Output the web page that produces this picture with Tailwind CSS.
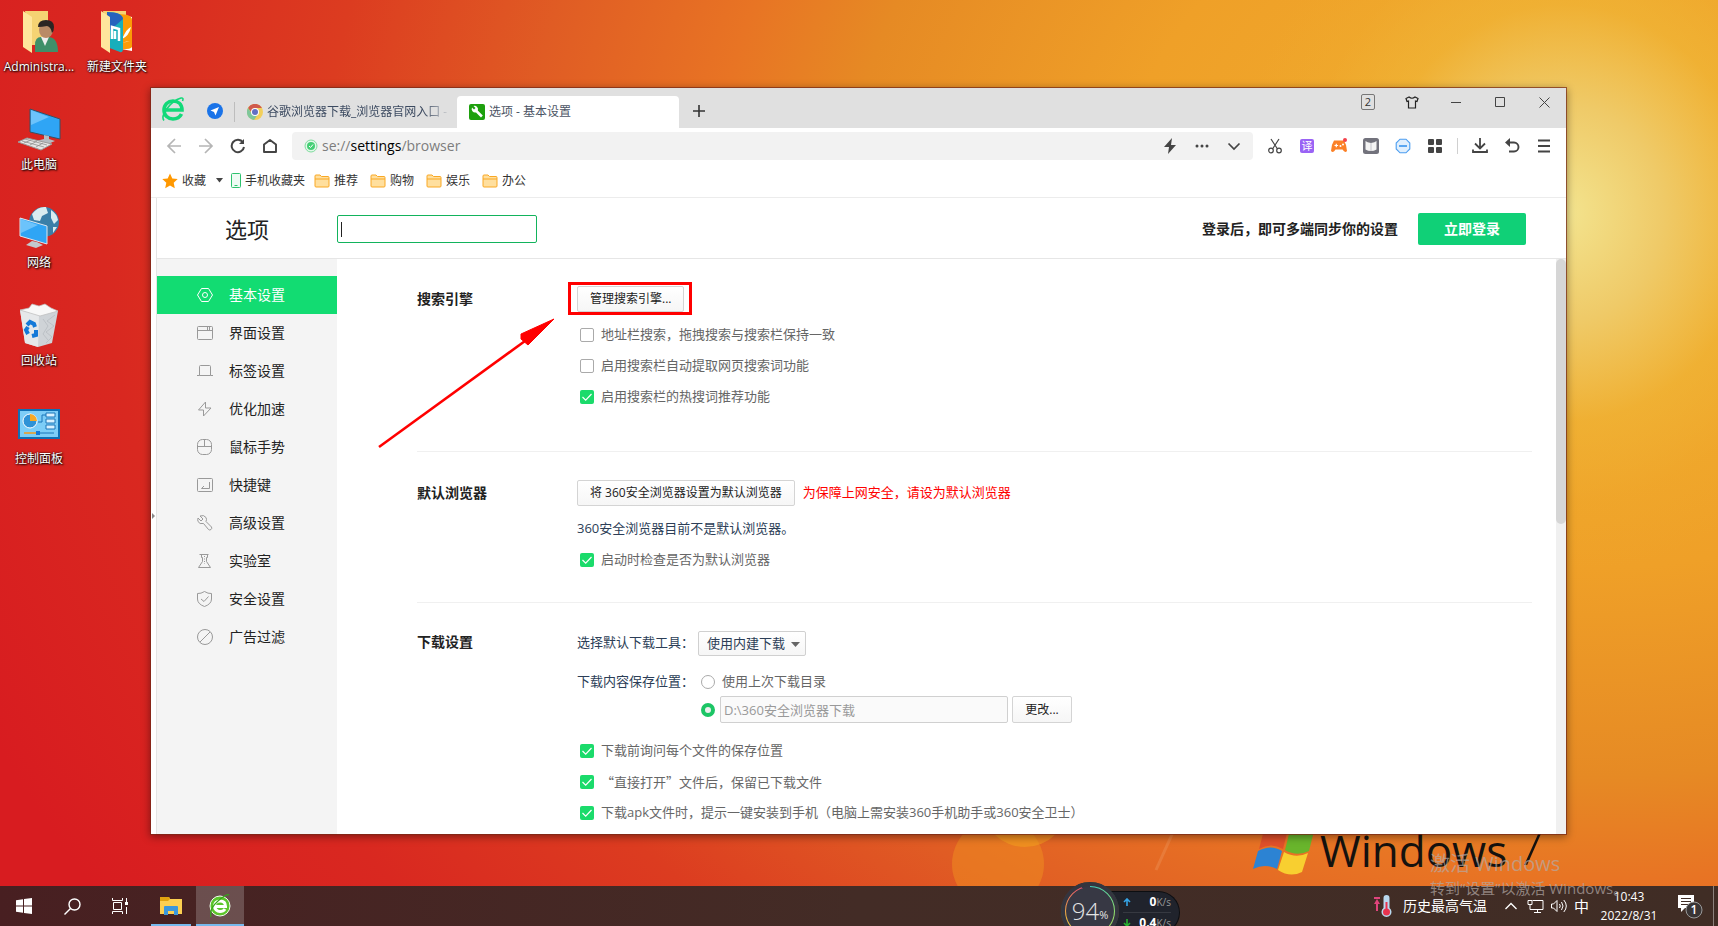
<!DOCTYPE html>
<html lang="zh-CN">
<head>
    <meta charset="UTF-8">
    <meta name="viewport" content="width=device-width, initial-scale=1.0">
    <title>选项 - 基本设置</title>
    <script src="https://cdn.jsdelivr.net/npm/@tailwindcss/browser@4"></script>
</head>
<body class="font-['Open_Sans','Noto_Sans_CJK_SC',sans-serif] text-xs text-[#222]">

<!-- shared symbols -->
<svg class="hidden">
    <symbol id="tick" viewBox="0 0 14 14"><path d="M2.5 7l3.2 3.2L11.5 4" fill="none" stroke="#fff" stroke-width="1.2"/></symbol>
    <symbol id="folder" viewBox="0 0 16 14"><path d="M1 2V12a1 1 0 0 0 1 1h12a1 1 0 0 0 1-1V3.500a1 1 0 0 0-1-1H7.500L6 1H2a1 1 0 0 0-1 1z" fill="#ffdf9e" stroke="#f9a825"/><path d="M1 5h14" stroke="#f9a825"/></symbol>
</svg>

<div class="relative flex h-screen flex-col overflow-hidden bg-[radial-gradient(ellipse_1700px_1300px_at_93%_22%,#f0b030_0%,#efa028_28%,#e68a24_44%,#e87424_52%,#e05c24_63%,#dc3c20_75%,#d92820_88%,#d81c20_103%)]">
    <div class="absolute inset-0 bg-[radial-gradient(ellipse_330px_360px_at_91%_23%,#f3e48f_0%,#efca68_30%,#f0b83a88_58%,#f0b03033_80%,#f0b03000_100%)]"></div>

    <!-- desktop -->
    <div class="relative min-h-0 flex-1">
        <!-- wallpaper shapes -->
        <svg class="absolute bottom-0 left-[940px]" width="260" height="56" viewBox="0 0 260 56">
            <circle cx="58" cy="34" r="46" fill="#f09020" opacity=".5"/>
            <circle cx="85" cy="-26" r="43" fill="#f6a820" opacity=".45"/>
            <path d="M234 0l-18 40" stroke="#f09a60" stroke-width="3" opacity=".35"/>
        </svg>
        <div class="absolute bottom-2 left-[1252px] flex items-end text-[#15120f]">
            <svg width="64" height="56" viewBox="0 0 64 56">
                <path d="M12 8q14-8 24-1l-5 20q-12-7-24 0z" fill="#e0502a"/>
                <path d="M38 8q12 7 24 1l-5 20q-12 6-24-1z" fill="#69b52c"/>
                <path d="M6 29q13-7 24 0l-5 18q-12-6-24 0z" fill="#2c83d3"/>
                <path d="M32 30q12 7 24 1l-6 19q-12 6-24-2z" fill="#f8cf30"/>
            </svg>
            <span class="pl-1 text-[44px] leading-[56px]">Windows</span>
            <span class="pl-2 text-[54px] leading-[68px] font-light">7</span>
        </div>

        <div class="grid w-39 auto-rows-[98px] grid-cols-2 justify-items-center pt-[9px] text-center leading-4 text-white [text-shadow:1px_1px_2px_#000,0_0_2px_#000]">
            <div>
                <svg class="mx-auto mb-1" width="44" height="46" viewBox="0 0 44 46">
                    <path d="M8 2h23v34H14z" fill="#f5d373"/>
                    <path d="M6 2l9 6v36L6 38z" fill="#ffe69c"/>
                    <path d="M18 43V36q0-8 6-8h8q9 1 9 15z" fill="#3f8f69"/>
                    <path d="M24 28l4 9 4-9z" fill="#eee"/>
                    <ellipse cx="29" cy="21" rx="7" ry="8" fill="#b98a66"/>
                    <path d="M21 18q0-7 8-7t8 7q0 4-2 6-1-6-5-7-5 1-9 1z" fill="#2b2523"/>
                </svg>
                Administra...
            </div>
            <div>
                <svg class="mx-auto mb-1" width="44" height="46" viewBox="0 0 44 46">
                    <path d="M8 2h23v34H14z" fill="#f5d373"/>
                    <path d="M26 6l11 2v34l-11-2z" fill="#fff"/><path d="M23 5q14 0 14 6v27q-2 3-14 2z" fill="#fb9b07"/>
                    <path d="M27 30q5-11 9-12-2 9-9 12zm0 4q5-2 8-2" fill="#fff"/>
                    <path d="M12 3q15 0 16 7v31q-1 3-3 2l-13-5z" fill="#18aebb"/><path d="M12 3q15 0 16 7l-16 14z" fill="#2563bd"/>
                    <path d="M17 30V18l7 2v12m-4-2V22" stroke="#fff" stroke-width="2.500" fill="none"/>
                    <path d="M6 2l9 6v36L6 38z" fill="#ffe69c"/>
                </svg>
                新建文件夹
            </div>
            <div class="col-span-2 w-1/2 justify-self-start">
                <svg class="mx-auto mb-1" width="44" height="46" viewBox="0 0 44 46">
                    <path d="M13 2l30 10v20L13 25z" fill="#2fa5f5" stroke="#3c4f60"/>
                    <path d="M14 3l18 7-18 8z" fill="#6cc3fb"/>
                    <path d="M27 28l5 1v3l6 2-7 3-12-3 8-2z" fill="#b6bcc2"/>
                    <path d="M10 31l25 6-11 6L1 35z" fill="#e5e5e5" stroke="#9a9a9a"/>
                    <path d="M5 34l22 6M8 32l22 6M14 33l-7 3m13-2l-7 4m13-2l-7 4" stroke="#8f8f8f" stroke-width=".8"/>
                </svg>
                此电脑
            </div>
            <div class="col-span-2 w-1/2 justify-self-start">
                <svg class="mx-auto mb-1" width="44" height="46" viewBox="0 0 44 46">
                    <circle cx="27" cy="17" r="15" fill="#3a7fa8"/>
                    <path d="M15 9q6-8 14-7l2 6-6 3-2 5-6-1zM34 5q6 4 7 10l-4 4-3-6zM36 22l4 0-4 6z" fill="#d9ecf0"/>
                    <path d="M3 13l27 8v18L3 31z" fill="#2fa5f5" stroke="#dfe6ec"/>
                    <path d="M4 14l17 6-17 8z" fill="#6cc3fb"/>
                    <path d="M15 36l5 1 6 3-7 3-10-3z" fill="#c3c8cd"/>
                </svg>
                网络
            </div>
            <div class="col-span-2 w-1/2 justify-self-start">
                <svg class="mx-auto mb-1" width="44" height="46" viewBox="0 0 44 46">
                    <path d="M3 7l38 1-6 32-14 4-13-4z" fill="#cfd3d7"/>
                    <path d="M3 7l19 5-1 32-13-4z" fill="#e6e8ea"/>
                    <path d="M3 7l9-2 3-4 7 2 6-2 6 4 7 3-18 5z" fill="#f8f8f8" stroke="#bbb" stroke-width=".7"/>
                    <path d="M38 12l-8 6 7 5-8 6 6 5-6 6M26 16l5 7-5 8 5 6" fill="none" stroke="#b7bcc1" stroke-width=".8"/>
                    <path d="M10 22l3-3 4 2 1 3" fill="none" stroke="#1479d8" stroke-width="4"/>
                    <path d="M19 27v5l-4 1m-4-2l-2-4 2-3" fill="none" stroke="#1479d8" stroke-width="4"/>
                </svg>
                回收站
            </div>
            <div class="col-span-2 w-1/2 justify-self-start">
                <svg class="mx-auto mb-1" width="44" height="46" viewBox="0 0 44 46">
                    <path d="M1 8h42v30H1z" fill="#0f6fb5"/><path d="M3 10h38v26H3z" fill="#7dcdf7"/>
                    <circle cx="13" cy="20" r="7" fill="#2f92d6" stroke="#fff"/>
                    <path d="M13 20v-7a7 7 0 0 1 7 7z" fill="#f7a825"/>
                    <path d="M21 21h4v-7h4" fill="none" stroke="#1a75b8"/>
                    <path d="M29 12h9v4h-9zm0 6h9v4h-9zm0 6h9v4h-9z" fill="#d9f1ff" stroke="#1a75b8"/>
                    <path d="M7 32h14" stroke="#f39a1c" stroke-width="1.500"/><path d="M21 32h16" stroke="#1a75b8"/>
                    <path d="M19 30h4v4h-4z" fill="#1479d8"/>
                </svg>
                控制面板
            </div>
        </div>

        <!-- browser window -->
        <div class="absolute top-[87px] right-[151px] bottom-[51px] left-[150px] flex flex-col overflow-hidden border border-[#7a2a18]/70 bg-white bg-clip-padding shadow-[0_2px_8px_rgba(0,0,0,0.4)]">
            <!-- tab strip -->
            <div class="flex h-10 shrink-0 items-end bg-[#e0e0e0]">
                <div class="flex h-[34px] w-[83px] items-center gap-[22px] pl-[10px]">
                    <svg class="mb-1" width="24" height="26" viewBox="0 0 24 26" fill="none">
                        <path d="M4 14h17C21 8 17 5 12 5S3 8.500 3 14s4 9 9 9c4 0 7-2 8.500-5" stroke="#12d979" stroke-width="3.600"/>
                        <path d="M3 24.500C-1 20 9 5 20 2q3-.5 1.500 3" stroke="#12d979" stroke-width="1.600"/>
                    </svg>
                    <svg width="16" height="16" viewBox="0 0 16 16"><circle cx="8" cy="8" r="8" fill="#1a73e8"/><path d="M12 4L3.500 7.500 7 9l1.500 3.500z" fill="#fff"/></svg>
                </div>
                <div class="flex h-8 w-[223px] items-center overflow-hidden">
                    <span class="mr-3 h-5 w-px shrink-0 bg-[#bdbdbd]"></span>
                    <svg class="mr-1 shrink-0" width="16" height="16" viewBox="0 0 16 16">
                        <circle cx="8" cy="8" r="8" fill="#f2cf5b"/>
                        <path d="M1 4a8 8 0 0 1 14 0H8L5 9z" fill="#d05a4c"/>
                        <path d="M1 4a8 8 0 0 0 6 12l4-6H5z" fill="#7fc79b"/>
                        <circle cx="8" cy="8" r="4" fill="#fff"/><circle cx="8" cy="8" r="3" fill="#6270c4"/>
                    </svg>
                    <span class="w-[184px] whitespace-nowrap text-[#3c4a60] [mask-image:linear-gradient(to_right,#000_85%,transparent)]">谷歌浏览器下载_浏览器官网入口 -</span>
                </div>
                <div class="flex h-8 w-[222px] items-center gap-1 rounded-t bg-white pl-3 text-[#4c5565]">
                    <svg width="16" height="16" viewBox="0 0 16 16"><rect width="16" height="16" rx="2" fill="#1ea00e"/><path d="M3 3.500l2 2 1.500-1.500-2-2a3.500 3.500 0 0 1 4.300 4.600l5 5-1.800 1.800-5-5A3.500 3.500 0 0 1 3 3.500z" fill="#fff"/></svg>
                    选项 - 基本设置
                </div>
                <button class="flex h-[34px] w-[40px] items-center justify-center" aria-label="新标签页">
                    <svg width="14" height="14" viewBox="0 0 14 14"><path d="M7 1v12M1 7h12" stroke="#333" stroke-width="1.600"/></svg>
                </button>
                <div class="ml-auto flex h-full items-start text-[#333]">
                    <button class="flex h-7 w-11 items-center justify-center"><span class="h-4 w-[14px] rounded-xs border border-[#777] text-center text-[11px] leading-[14px]">2</span></button>
                    <button class="flex h-7 w-11 items-center justify-center" aria-label="皮肤"><svg width="14" height="13" viewBox="0 0 14 13"><path d="M4 1L1 2.500l1 3 1.500-.5V12h7V5l1.500.5 1-3L10 1Q7 3.500 4 1z" fill="none" stroke="#222" stroke-width="1.200"/></svg></button>
                    <button class="flex h-7 w-11 items-center justify-center" aria-label="最小化"><svg width="10" height="10" viewBox="0 0 10 10"><path d="M0 5.500h10" stroke="#444"/></svg></button>
                    <button class="flex h-7 w-11 items-center justify-center" aria-label="最大化"><svg width="10" height="10" viewBox="0 0 10 10"><path d="M.5.5h9v9h-9z" fill="none" stroke="#444"/></svg></button>
                    <button class="flex h-7 w-11 items-center justify-center" aria-label="关闭"><svg width="11" height="11" viewBox="0 0 11 11"><path d="M.5.5l10 10m0-10l-10 10" stroke="#444"/></svg></button>
                </div>
            </div>

            <!-- toolbar -->
            <div class="flex h-9 shrink-0 items-center pr-[6px]">
                <div class="flex w-[141px] items-center gap-4 pl-[15px]">
                    <svg width="16" height="16" viewBox="0 0 16 16" fill="none" stroke="#b5b5b5" stroke-width="1.700"><path d="M15 8H2m7-7L2 8l7 7"/></svg>
                    <svg width="16" height="16" viewBox="0 0 16 16" fill="none" stroke="#b5b5b5" stroke-width="1.700"><path d="M1 8h13M7 1l7 7-7 7"/></svg>
                    <svg width="16" height="16" viewBox="0 0 16 16" fill="none" stroke="#444" stroke-width="2"><path d="M13 4.500A6.200 6.200 0 1 0 14 9"/><path d="M14 1v5H9z" fill="#444" stroke="none"/></svg>
                    <svg width="16" height="16" viewBox="0 0 16 16" fill="none" stroke="#444" stroke-width="1.900"><path d="M2 14V6.500L8 2l6 4.500V14z" stroke-linejoin="round"/></svg>
                </div>
                <div class="flex h-7 min-w-0 flex-1 items-center rounded bg-[#f2f2f2] pl-3">
                    <svg class="mr-1" width="14" height="14" viewBox="0 0 14 14" fill="none"><circle cx="7" cy="7" r="6" fill="#e3f8ea" stroke="#7fdc9d"/><circle cx="7" cy="7" r="4" fill="#45cf75"/><path d="M5 7l1.500 1.500L9 5.500" stroke="#fff"/></svg>
                    <span class="flex-1 text-sm leading-5 text-[#7d7d7d]">se://<span class="text-black">settings</span>/browser</span>
                    <span class="flex items-center pr-[3px]">
                        <svg class="mx-2" width="16" height="16" viewBox="0 0 16 16"><path d="M10 0L2 9h5l-1 7 8-9H9z" fill="#444"/></svg>
                        <svg class="mx-2" width="16" height="16" viewBox="0 0 16 16" fill="#444"><circle cx="3" cy="8" r="1.500"/><circle cx="8" cy="8" r="1.500"/><circle cx="13" cy="8" r="1.500"/></svg>
                        <svg class="mx-2" width="16" height="16" viewBox="0 0 16 16"><path d="M2.500 5.500L8 11l5.500-5.500" fill="none" stroke="#444" stroke-width="1.700"/></svg>
                    </span>
                </div>
                <div class="flex items-center pl-[6px]">
                    <svg class="mx-2" width="16" height="16" viewBox="0 0 16 16" fill="none" stroke="#444" stroke-width="1.200"><path d="M4 1l6.500 10M12 1L5.500 11"/><circle cx="4" cy="12.500" r="2.300"/><circle cx="12" cy="12.500" r="2.300"/></svg>
                    <span class="mx-[9px] h-[14px] w-[14px] rounded-xs bg-[#9a63f5] text-center text-[11px] leading-[13px] text-white">译</span>
                    <svg class="mx-2" width="16" height="16" viewBox="0 0 16 16"><path d="M3 2.500h10q2.700 4 3 10.500-2 2.500-4.500-1.500h-7Q2.500 15.500 0 13 .3 6.500 3 2.500z" fill="#fb8027"/><path d="M3.500 7.500h3.600M5.300 5.700v3.600" stroke="#fff" stroke-width="1.200"/><circle cx="9.500" cy="8" r="1" fill="#fff"/><circle cx="12" cy="6.500" r="1" fill="#fff"/><circle cx="14" cy="2" r="2" fill="#f4404a"/></svg>
                    <svg class="mx-2" width="16" height="16" viewBox="0 0 16 16"><rect width="16" height="16" rx="2.500" fill="#72727c"/><path d="M2.500 3q1.500 1.500 5.500 2 4-.5 5.500-2v8.500Q11 13 8 13t-5.500-1.500z" fill="#f4f4f4"/><path d="M8 5v8" stroke="#c4c4ca"/></svg>
                    <svg class="mx-2" width="16" height="16" viewBox="0 0 16 16" fill="none" stroke="#4b9df0"><path d="M5 1.200h6L14.800 5v6L11 14.800H5L1.200 11V5z" fill="#e0effd" stroke-width="1.100"/><path d="M4 8h8" stroke-width="1.800"/></svg>
                    <svg class="mx-2" width="16" height="16" viewBox="0 0 16 16" fill="#444"><rect x="1" y="1" width="6" height="6" rx="1"/><rect x="9" y="1" width="6" height="6" rx="1"/><rect x="1" y="9" width="6" height="6" rx="1"/><rect x="9" y="9" width="6" height="6" rx="1"/></svg>
                    <span class="mx-[6px] h-4 w-px bg-[#d0d0d0]"></span>
                    <svg class="mx-2" width="16" height="16" viewBox="0 0 16 16" fill="none" stroke="#444" stroke-width="1.800"><path d="M8 0v10M3 5.500l5 5 5-5M1 11.500V14h14v-2.500"/></svg>
                    <svg class="mx-2" width="16" height="16" viewBox="0 0 16 16" fill="none" stroke="#444" stroke-width="1.900"><path d="M3 4.500h7a4.500 4.500 0 0 1 0 9H5"/><path d="M6 0v9L1 4.500z" fill="#444" stroke="none"/></svg>
                    <svg class="mx-2" width="16" height="16" viewBox="0 0 16 16"><path d="M2 2.500h12M2 8h12M2 13.500h12" stroke="#444" stroke-width="1.800"/></svg>
                </div>
            </div>

            <!-- bookmarks -->
            <div class="flex h-[34px] shrink-0 items-center gap-3 border-b border-[#ececec] pl-[11px] text-[#333]">
                <span class="flex items-center gap-1">
                    <svg width="16" height="16" viewBox="0 0 16 16"><path d="M8 .5l2.300 5 5.400.6-4 3.700 1.100 5.400L8 12.500l-4.800 2.700 1.100-5.400-4-3.700 5.400-.6z" fill="#ff9800"/></svg>
                    收藏
                </span>
                <span class="-ml-[2px] flex items-center gap-1">
                    <svg class="mr-1" width="7" height="5" viewBox="0 0 7 5"><path d="M0 0h7L3.500 4.500z" fill="#444"/></svg>
                    <svg width="10" height="15" viewBox="0 0 10 15"><rect x=".5" y=".5" width="9" height="14" rx="1" fill="#effbf4" stroke="#2fc26e"/><path d="M3.500 12.500h3" stroke="#2fc26e"/></svg>
                    手机收藏夹
                </span>
                <a href="#" class="-ml-[3px] flex items-center gap-1"><svg width="16" height="14"><use href="#folder"/></svg>推荐</a>
                <a href="#" class="flex items-center gap-1"><svg width="16" height="14"><use href="#folder"/></svg>购物</a>
                <a href="#" class="flex items-center gap-1"><svg width="16" height="14"><use href="#folder"/></svg>娱乐</a>
                <a href="#" class="flex items-center gap-1"><svg width="16" height="14"><use href="#folder"/></svg>办公</a>
            </div>

            <div class="flex min-h-0 flex-1">
                <div class="flex w-[6px] shrink-0 items-center border-r border-[#e4e4e4] bg-white">
                    <svg width="4" height="6" viewBox="0 0 4 6"><path d="M1 0l3 3-3 3z" fill="#888"/></svg>
                </div>
                <div class="flex min-w-0 flex-1 flex-col">
                    <!-- settings header -->
                    <div class="flex h-[61px] shrink-0 items-center border-b border-[#e6e6e6] pt-px pr-10">
                        <h1 class="w-[180px] pl-[68px] text-[22px] leading-8">选项</h1>
                        <span class="relative">
                            <input id="search" type="text" aria-label="搜索设置" class="block h-7 w-50 rounded-xs border border-[#12b35c] px-1 text-sm outline-none">
                            <span class="absolute top-[7px] left-1 h-[15px] w-px bg-[#222]"></span>
                        </span>
                        <span class="ml-auto text-sm font-semibold">登录后，即可多端同步你的设置</span>
                        <button class="ml-5 h-8 w-27 rounded-xs bg-[#10d077] text-sm font-semibold text-white">立即登录</button>
                    </div>

                    <div class="flex min-h-0 flex-1">
                        <!-- sidebar -->
                        <nav class="w-[180px] shrink-0 bg-[#f4f4f4] pt-[17px] text-sm">
                            <a href="#" class="flex h-[38px] items-center gap-4 bg-[#12dc72] pl-10 text-white">
                                <svg width="16" height="16" viewBox="0 0 16 16" fill="none" stroke="#fff"><path d="M4.500 1.500h7L15.500 8l-4 6.500h-7L.5 8z"/><circle cx="8" cy="8" r="2.500"/></svg>基本设置</a>
                            <a href="#" class="flex h-[38px] items-center gap-4 pl-10">
                                <svg width="16" height="16" viewBox="0 0 16 16" fill="none" stroke="#999"><rect x=".5" y="1.500" width="15" height="13" rx="1"/><path d="M.5 5.500h15M10.500 2v3m2-3v3"/></svg>界面设置</a>
                            <a href="#" class="flex h-[38px] items-center gap-4 pl-10">
                                <svg width="16" height="16" viewBox="0 0 16 16" fill="none" stroke="#999"><path d="M0 12.500h2.500v-9a1 1 0 0 1 1-1h9a1 1 0 0 1 1 1v9H16M2.500 12.500h11"/></svg>标签设置</a>
                            <a href="#" class="flex h-[38px] items-center gap-4 pl-10">
                                <svg width="16" height="16" viewBox="0 0 16 16" fill="none" stroke="#999"><path d="M8.500 1L1.500 9h5l0 6 7.500-8H8.500z"/></svg>优化加速</a>
                            <a href="#" class="flex h-[38px] items-center gap-4 pl-10">
                                <svg width="16" height="16" viewBox="0 0 16 16" fill="none" stroke="#999"><rect x=".5" y=".5" width="14" height="15" rx="5"/><path d="M.5 7.500h14m-7-7v7"/></svg>鼠标手势</a>
                            <a href="#" class="flex h-[38px] items-center gap-4 pl-10">
                                <svg width="16" height="16" viewBox="0 0 16 16" fill="none" stroke="#999"><rect x=".5" y="1.500" width="15" height="13" rx="1"/><path d="M12.500 5v6.500h-8l2.500-2.500"/></svg>快捷键</a>
                            <a href="#" class="flex h-[38px] items-center gap-4 pl-10">
                                <svg width="16" height="16" viewBox="0 0 16 16" fill="none" stroke="#999"><path d="M1 3l3 3 2-2-3-3q4-1.500 6 1.500 1 2 0 4l5.500 5.500q.8 1.500-.5 2.500t-2.500 0L6.500 8.500Q2.500 9.500 1 6.500.5 5 1 3z"/></svg>高级设置</a>
                            <a href="#" class="flex h-[38px] items-center gap-4 pl-10">
                                <svg width="16" height="16" viewBox="0 0 16 16" fill="none" stroke="#999"><path d="M2.500 1.500h9M4.500 2v2.500h1v4L1.500 14.500h12l-4-6v-4h1V2"/><path d="M7.500 3v8" stroke-dasharray="1 1.500"/></svg>实验室</a>
                            <a href="#" class="flex h-[38px] items-center gap-4 pl-10">
                                <svg width="16" height="16" viewBox="0 0 16 16" fill="none" stroke="#999"><path d="M7.500.5q3.500 2.300 7 2V8q0 5-7 7.500-7-2.500-7-7.500V2.500q3.500.3 7-2z"/><path d="M4 8l3 2.500L11.500 5.500"/></svg>安全设置</a>
                            <a href="#" class="flex h-[38px] items-center gap-4 pl-10">
                                <svg width="16" height="16" viewBox="0 0 16 16" fill="none" stroke="#999"><circle cx="8" cy="8" r="7.500"/><path d="M3 13L13 3"/></svg>广告过滤</a>
                        </nav>

                        <!-- settings -->
                        <main class="min-w-0 flex-1 overflow-hidden pr-6 pl-20 text-[13px] text-[#2c3e57]">
                            <section class="flex border-b border-[#f0f0f0] pt-[27px] pb-[39px]">
                                <h2 class="w-40 shrink-0 text-sm leading-[26px] font-semibold text-[#222]">搜索引擎</h2>
                                <div>
                                    <button class="mb-[7px] block h-[26px] rounded-xs border border-[#d4d4d4] bg-linear-to-b from-white to-[#f6f6f6] px-3 text-xs text-[#222]">管理搜索引擎...</button>
                                    <label class="flex h-[31px] items-center gap-[7px] pl-[3px] text-[#666]"><input type="checkbox" class="size-[14px] appearance-none rounded-xs border border-[#aaa]">地址栏搜索，拖拽搜索与搜索栏保持一致</label>
                                    <label class="flex h-[31px] items-center gap-[7px] pl-[3px] text-[#666]"><input type="checkbox" class="size-[14px] appearance-none rounded-xs border border-[#aaa]">启用搜索栏自动提取网页搜索词功能</label>
                                    <label class="flex h-[31px] items-center gap-[7px] pl-[3px] text-[#666]"><span class="grid"><input type="checkbox" checked class="col-start-1 row-start-1 size-[14px] appearance-none rounded-xs bg-[#1bdb6b]"><svg class="col-start-1 row-start-1" width="14" height="14"><use href="#tick"/></svg></span>启用搜索栏的热搜词推荐功能</label>
                                </div>
                            </section>

                            <section class="flex border-b border-[#f0f0f0] pt-7 pb-[27px]">
                                <h2 class="w-40 shrink-0 text-sm leading-[26px] font-semibold text-[#222]">默认浏览器</h2>
                                <div>
                                    <div class="mb-[7px] flex items-center gap-2">
                                        <button class="h-[26px] rounded-xs border border-[#d4d4d4] bg-linear-to-b from-white to-[#f6f6f6] px-3 text-xs text-[#222]">将 360安全浏览器设置为默认浏览器</button>
                                        <span class="text-[#f00]">为保障上网安全，请设为默认浏览器</span>
                                    </div>
                                    <p class="leading-[31px]">360安全浏览器目前不是默认浏览器。</p>
                                    <label class="flex h-[31px] items-center gap-[7px] pl-[3px] text-[#666]"><span class="grid"><input type="checkbox" checked class="col-start-1 row-start-1 size-[14px] appearance-none rounded-xs bg-[#1bdb6b]"><svg class="col-start-1 row-start-1" width="14" height="14"><use href="#tick"/></svg></span>启动时检查是否为默认浏览器</label>
                                </div>
                            </section>

                            <section class="flex pt-7">
                                <h2 class="w-40 shrink-0 text-sm leading-[22px] font-semibold text-[#222]">下载设置</h2>
                                <div>
                                    <div class="mb-[14px] flex h-[25px]">
                                        <label for="tool" class="w-[121px] leading-[22px]">选择默认下载工具：</label>
                                        <span class="relative">
                                            <select id="tool" class="block h-[25px] w-27 appearance-none rounded-xs border border-[#d0d0d0] bg-linear-to-b from-white to-[#f6f6f6] pl-2 text-[13px]"><option>使用内建下载</option></select>
                                            <svg class="pointer-events-none absolute top-[11px] right-[6px]" width="9" height="5" viewBox="0 0 9 5"><path d="M0 0h9L4.500 5z" fill="#666"/></svg>
                                        </span>
                                    </div>
                                    <div class="mb-3 flex">
                                        <span class="w-[124px] leading-[22px]">下载内容保存位置：</span>
                                        <div>
                                            <label class="mb-[2px] flex h-6 items-center gap-[7px] text-[#666]"><input type="radio" name="dir" class="size-[14px] appearance-none rounded-full border border-[#aaa]">使用上次下载目录</label>
                                            <div class="flex items-center">
                                                <input type="radio" name="dir" checked aria-label="指定目录" class="mr-[5px] size-[14px] appearance-none rounded-full border-4 border-[#1cc565] bg-[#eee]">
                                                <input type="text" disabled aria-label="保存位置" value="D:\360安全浏览器下载" class="mr-1 h-[27px] w-72 rounded-xs border border-[#d0d0d0] bg-[#fafafa] px-[3px] text-[13px] text-[#999]">
                                                <button class="h-[27px] w-15 rounded-xs border border-[#d4d4d4] bg-linear-to-b from-white to-[#f6f6f6] text-xs text-[#222]">更改...</button>
                                            </div>
                                        </div>
                                    </div>
                                    <label class="flex h-[31px] items-center gap-[7px] pl-[3px] text-[#666]"><span class="grid"><input type="checkbox" checked class="col-start-1 row-start-1 size-[14px] appearance-none rounded-xs bg-[#1bdb6b]"><svg class="col-start-1 row-start-1" width="14" height="14"><use href="#tick"/></svg></span>下载前询问每个文件的保存位置</label>
                                    <label class="flex h-[31px] items-center gap-[7px] pl-[3px] font-['Noto_Sans_CJK_SC',sans-serif] text-[#666]"><span class="grid"><input type="checkbox" checked class="col-start-1 row-start-1 size-[14px] appearance-none rounded-xs bg-[#1bdb6b]"><svg class="col-start-1 row-start-1" width="14" height="14"><use href="#tick"/></svg></span>“直接打开”文件后，保留已下载文件</label>
                                    <label class="flex h-[31px] items-center gap-[7px] pl-[3px] text-[#666]"><span class="grid"><input type="checkbox" checked class="col-start-1 row-start-1 size-[14px] appearance-none rounded-xs bg-[#1bdb6b]"><svg class="col-start-1 row-start-1" width="14" height="14"><use href="#tick"/></svg></span>下载apk文件时，提示一键安装到手机（电脑上需安装360手机助手或360安全卫士）</label>
                                </div>
                            </section>
                        </main>

                        <div class="w-[10px] shrink-0 bg-[#f0f0f0]"><div class="h-[46%] rounded-full bg-[#d6d6d6]"></div></div>
                    </div>
                </div>
            </div>
        </div>

        <!-- red annotation: box and arrow -->
        <div class="absolute top-[282px] left-[568px] h-[33px] w-[124px] border-[3px] border-[#f00]"></div>
        <svg class="absolute top-[315px] left-[375px]" width="182" height="136" viewBox="0 0 182 136">
            <path d="M4 132L150 26" stroke="#f00" stroke-width="2.500"/>
            <path d="M179 4l-33 15v5l7 6z" fill="#f00" stroke="#f00"/>
        </svg>
    </div>

    <!-- taskbar -->
    <div class="relative flex h-10 shrink-0 items-center bg-linear-to-r from-[#481f21] via-[#432c26] to-[#402d25] text-white">
        <div class="flex h-full w-12 items-center justify-center"><svg width="16" height="16" viewBox="0 0 16 16" fill="#fff"><path d="M0 2.300l7-1v6.200H0zM8 1.100L16 0v7.500H8zM0 8.500h7v6.200l-7-1zM8 8.500h8V16l-8-1.100z"/></svg></div>
        <div class="flex h-full w-12 items-center justify-center"><svg width="17" height="17" viewBox="0 0 17 17" fill="none" stroke="#fff" stroke-width="1.400"><circle cx="10.500" cy="6.500" r="5.500"/><path d="M6.500 10.500L.5 16.500"/></svg></div>
        <div class="flex h-full w-12 items-center justify-center"><svg width="17" height="16" viewBox="0 0 17 16" fill="none" stroke="#fff"><path d="M.5 0v2.500h10V0M.5 16v-2.500h10V16M1.500 4.500h8v7h-8zM14.500 0v4m0 5v7"/><path d="M13 4h3v3h-3z" fill="#fff" stroke="none"/></svg></div>
        <div class="flex h-full w-12 flex-col items-center justify-between pl-[6px]">
            <svg class="mt-[10px]" width="22" height="20" viewBox="0 0 22 20"><path d="M0 1h9l1 2h12v15H0z" fill="#fccf51"/><path d="M0 1h9l1 2-2 2H0z" fill="#e0a310"/><path d="M4 19v-8q0-1 1-1h12q1 0 1 1v8h-4v-4H8v4z" fill="#3b97dc"/></svg>
            <span class="h-[2px] w-10 bg-[#76b9ed]"></span>
        </div>
        <div class="ml-1 flex h-full w-12 flex-col items-center justify-between bg-white/20">
            <svg class="mt-2" width="22" height="24" viewBox="0 0 22 24"><circle cx="11" cy="12" r="10" fill="#5cc52b" stroke="#f3fff0"/><path d="M6 12.500h10.500c0-3.500-2.200-5.500-5.500-5.500s-5.500 2-5.500 5 2.500 5.500 5.500 5.500c2.500 0 4-1 5-2.500" fill="none" stroke="#fff" stroke-width="3"/><path d="M2 23Q0 15 9 7t11-6" fill="none" stroke="#35a818" stroke-width="1.200"/></svg>
            <span class="h-[2px] w-full bg-[#76b9ed]"></span>
        </div>

        <div class="ml-auto flex h-full items-center">
            <svg width="20" height="24" viewBox="0 0 20 24"><path d="M4 8v9M1 4h6" stroke="#e0447c" stroke-width="2"/><path d="M4 5L1 10h6z" fill="#e0447c"/><path d="M10.500 14V4a3 3 0 0 1 6 0v10a5 5 0 1 1-6 0z" fill="#b9d8ee"/><circle cx="13.500" cy="18" r="3.500" fill="#e8334f"/><path d="M13.500 8v9" stroke="#e8334f" stroke-width="2"/></svg>
            <span class="ml-[10px] text-sm">历史最高气温</span>
            <svg class="ml-[18px]" width="12" height="8" viewBox="0 0 12 8"><path d="M.5 7L6 1.500 11.500 7" fill="none" stroke="#fff" stroke-width="1.300"/></svg>
            <svg class="ml-[10px]" width="17" height="15" viewBox="0 0 17 15" fill="none" stroke="#fff"><path d="M5.500 1.500h10.500v9H5.500M1 1.500h4v4H1zM3 5.500v5h3M10.500 10.500v3M7 13.500h7"/></svg>
            <svg class="ml-[7px]" width="17" height="14" viewBox="0 0 17 14" fill="none" stroke="#fff"><path d="M.5 5v4h2L6 12.500v-11L2.500 5zM8.500 5q1.500 2 0 4M10.500 3q3 4 0 8M12.800 1q5 6 0 12"/></svg>
            <span class="ml-[6px] text-[15px]">中</span>
            <div class="mr-[2px] w-20 text-center leading-[19px]">10:43<br>2022/8/31</div>
            <svg class="ml-[6px]" width="26" height="26" viewBox="0 0 26 26"><path d="M1 2h16v13h-9l-4 4v-4H1z" fill="#fff"/><path d="M4 5.500h10M4 8.500h10M4 11.500h7" stroke="#402d25"/><circle cx="17" cy="17" r="8" fill="#3a3535" stroke="#999"/><text x="17" y="21" text-anchor="middle" fill="#fff" font-size="12" font-weight="600">1</text></svg>
            <span class="mr-1 ml-[10px] h-full w-px bg-white/40"></span>
        </div>
    </div>

    <!-- speed ball -->
    <div class="absolute -bottom-[14px] left-[1061px] flex h-[58px] items-start text-[#ddd]">
        <div class="absolute top-[9px] left-[29px] w-[90px] rounded-full border border-black/60 bg-[#20232c] pr-2 pl-8 leading-5">
            <div class="flex items-center justify-between border-b border-white/10"><svg width="8" height="8" viewBox="0 0 8 8" fill="none" stroke="#35a5e8" stroke-width="1.600"><path d="M4 8V1M1 4l3-3 3 3"/></svg><span><b class="text-white">0</b><span class="text-[10px] text-[#999]">K/s</span></span></div>
            <div class="flex items-center justify-between"><svg width="8" height="8" viewBox="0 0 8 8" fill="none" stroke="#27b32f" stroke-width="1.600"><path d="M4 0v7M1 4l3 3 3-3"/></svg><span><b class="text-white">0.4</b><span class="text-[10px] text-[#999]">K/s</span></span></div>
        </div>
        <div class="relative grid size-[58px] shrink-0 place-items-center rounded-full border border-black/60 bg-[conic-gradient(#3fd0c0,#8fe070_25%,#c8d860_50%,#f0b840_70%,#e85070_95%,#363744_95%)]">
            <div class="absolute -inset-px rounded-full border-4 border-[#34353f]"></div>
            <div class="relative flex size-12 items-center justify-center rounded-full bg-[#373844] leading-6 text-[#e4e4e4]"><span class="text-2xl font-light">94</span><span class="pt-2 text-[11px]">%</span></div>
        </div>
    </div>

    <!-- activation notice -->
    <div class="pointer-events-none absolute right-[44px] bottom-7 w-61 text-[#b4aaa6]/70">
        <p class="text-xl leading-7">激活 Windows</p>
        <p class="text-[15px] leading-5">转到“设置”以激活 Windows。</p>
    </div>
</div>
</body>
</html>
